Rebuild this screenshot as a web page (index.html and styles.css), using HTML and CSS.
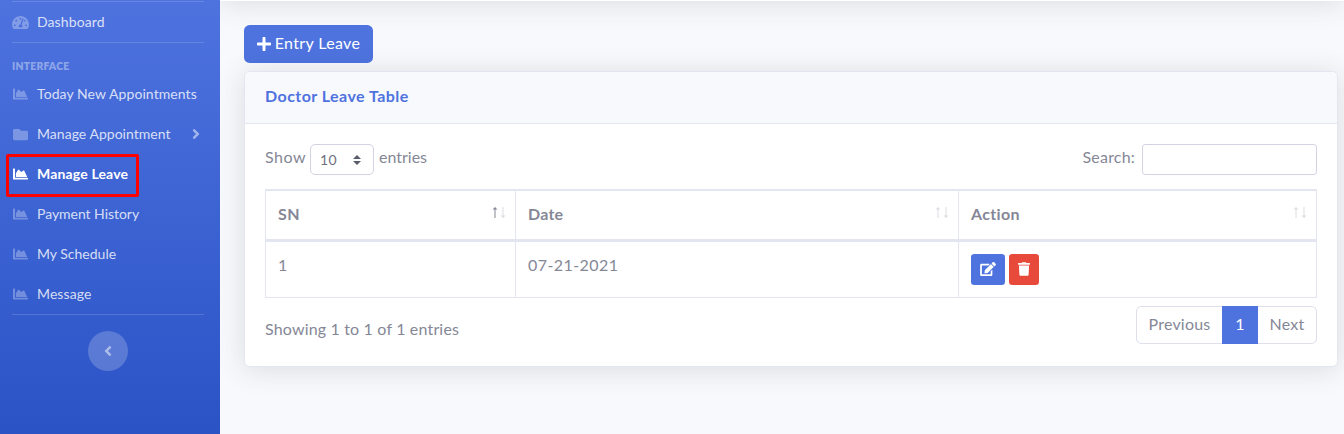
FILE: index.html
```
<!DOCTYPE html>
<html lang="en">
<head>
<meta charset="utf-8">
<title>Doctor Leave</title>
<link rel="stylesheet" href="styles.css">
</head>
<body>
<svg class="sprite" aria-hidden="true">
  <symbol id="chart" viewBox="0 0 17 15"><path d="M1.400 1.500h1.100q.5 0 .5.5v8.700h12.500q.5 0 .5.5v.8q0 .5-.5.5H1.400q-.4 0-.4-.4V1.900q0-.4.4-.4zM3.900 10V6.200L6.200 2.800q.4-.5.8 0L9.200 5l2.300-1.500q.5-.3.8.2L15.200 10z"/></symbol>
  <symbol id="folder" viewBox="0 0 512 512"><path d="M464 128H272l-64-64H48C21.490 64 0 85.490 0 112v288c0 26.510 21.490 48 48 48h416c26.510 0 48-21.490 48-48V176c0-26.510-21.490-48-48-48z"/></symbol>
  <symbol id="gauge" viewBox="0 0 576 512"><path d="M288 32C128.940 32 0 160.940 0 320c0 52.800 14.250 102.260 39.060 144.800 5.610 9.620 16.300 15.200 27.440 15.200h443c11.140 0 21.830-5.580 27.440-15.200C561.750 422.260 576 372.800 576 320c0-159.060-128.940-288-288-288zm0 64c14.710 0 26.580 10.130 30.320 23.650-1.110 2.260-2.640 4.230-3.450 6.670l-9.220 27.670c-5.130 3.490-10.970 6.010-17.640 6.010-17.670 0-32-14.330-32-32S270.330 96 288 96zM96 384c-17.670 0-32-14.330-32-32s14.330-32 32-32 32 14.330 32 32-14.330 32-32 32zm48-160c-17.670 0-32-14.330-32-32s14.330-32 32-32 32 14.330 32 32-14.330 32-32 32zm246.770-72.410l-61.330 184C343.130 347.330 352 364.540 352 384c0 11.720-3.380 22.550-8.880 32H232.880c-5.500-9.450-8.880-20.280-8.880-32 0-33.940 26.500-61.430 59.900-63.590l61.340-184.010c4.170-12.560 17.730-19.450 30.360-15.170 12.570 4.190 19.350 17.790 15.170 30.360zm14.660 57.200l15.520-46.550c3.470-1.290 7.130-2.230 11.050-2.230 17.670 0 32 14.330 32 32s-14.330 32-32 32c-11.380-.010-20.890-6.280-26.570-15.220zM480 384c-17.670 0-32-14.330-32-32s14.330-32 32-32 32 14.330 32 32-14.330 32-32 32z"/></symbol>
  <symbol id="right" viewBox="0 0 256 512"><path d="M224.300 273l-136 136c-9.400 9.400-24.600 9.400-33.900 0l-22.600-22.600c-9.400-9.400-9.400-24.600 0-33.900l96.400-96.400-96.400-96.400c-9.400-9.400-9.400-24.600 0-33.900L54.300 103c9.400-9.400 24.600-9.400 33.900 0l136 136c9.500 9.400 9.500 24.600.1 34z"/></symbol>
  <symbol id="left" viewBox="0 0 256 512"><path d="M31.700 239l136-136c9.400-9.400 24.600-9.400 33.900 0l22.600 22.600c9.400 9.400 9.400 24.600 0 33.900L127.900 256l96.400 96.400c9.400 9.400 9.400 24.600 0 33.900L201.700 409c-9.400 9.400-24.600 9.400-33.900 0l-136-136c-9.500-9.400-9.500-24.600-.1-34z"/></symbol>
  <symbol id="plus" viewBox="0 0 448 512"><path d="M416 208H272V64c0-17.670-14.330-32-32-32h-32c-17.670 0-32 14.330-32 32v144H32c-17.670 0-32 14.330-32 32v32c0 17.670 14.330 32 32 32h144v144c0 17.670 14.330 32 32 32h32c17.670 0 32-14.330 32-32V304h144c17.670 0 32-14.330 32-32v-32c0-17.670-14.330-32-32-32z"/></symbol>
  <symbol id="edit" viewBox="0 0 576 512"><path d="M402.600 83.200l90.200 90.200c3.800 3.800 3.800 10 0 13.800L274.400 405.600l-92.800 10.300c-12.400 1.400-22.900-9.100-21.500-21.500l10.300-92.800L388.800 83.200c3.800-3.800 10-3.800 13.800 0zm162-22.900l-48.800-48.800c-15.200-15.200-39.900-15.200-55.200 0l-35.400 35.400c-3.800 3.800-3.800 10 0 13.800l90.200 90.200c3.800 3.800 10 3.800 13.800 0l35.400-35.400c15.200-15.300 15.200-40 0-55.200zM384 346.200V448H64V128h229.800c3.200 0 6.200-1.300 8.500-3.500l40-40c7.600-7.600 2.200-20.500-8.500-20.500H48C21.500 64 0 85.500 0 112v352c0 26.500 21.500 48 48 48h352c26.500 0 48-21.500 48-48V306.200c0-10.700-12.900-16-20.500-8.500l-40 40c-2.200 2.300-3.500 5.300-3.500 8.500z"/></symbol>
  <symbol id="trash" viewBox="0 0 448 512"><path d="M432 32H312l-9.400-18.700A24 24 0 0 0 281.100 0H166.800a23.720 23.720 0 0 0-21.400 13.300L136 32H16A16 16 0 0 0 0 48v32a16 16 0 0 0 16 16h416a16 16 0 0 0 16-16V48a16 16 0 0 0-16-16zM53.200 467a48 48 0 0 0 47.900 45h245.800a48 48 0 0 0 47.900-45L416 128H32z"/></symbol>
  <symbol id="sort-up" viewBox="0 0 6 11"><path d="M2.500 11V2.500H.5L3 0l2.500 2.500h-2V11z"/></symbol>
  <symbol id="sort-down" viewBox="0 0 6 11"><path d="M2.500 0v8.500h-2L3 11l2.500-2.500h-2V0z"/></symbol>
</svg>

<div class="layout">
  <nav class="sidebar">
    <hr class="divider">
    <a class="nav-item"><svg class="nav-icon gauge"><use href="#gauge"/></svg><span class="t-dashboard">Dashboard</span></a>
    <hr class="divider">
    <div class="heading">INTERFACE</div>
    <a class="nav-item"><svg class="nav-icon"><use href="#chart"/></svg><span class="t-today">Today New Appointments</span></a>
    <a class="nav-item"><svg class="nav-icon"><use href="#folder"/></svg><span class="t-appt">Manage Appointment</span><svg class="caret"><use href="#right"/></svg></a>
    <a class="nav-item active"><svg class="nav-icon"><use href="#chart"/></svg><span class="t-leave">Manage Leave</span></a>
    <a class="nav-item"><svg class="nav-icon"><use href="#chart"/></svg><span class="t-payment">Payment History</span></a>
    <a class="nav-item"><svg class="nav-icon"><use href="#chart"/></svg><span class="t-schedule">My Schedule</span></a>
    <a class="nav-item"><svg class="nav-icon"><use href="#chart"/></svg><span class="t-message">Message</span></a>
    <hr class="divider">
    <button class="collapse" aria-label="Collapse"><svg><use href="#left"/></svg></button>
  </nav>

  <main class="content">
    <header class="topbar"></header>
    <div class="page">
      <button class="btn-entry"><svg><use href="#plus"/></svg><span class="t-entry">Entry Leave</span></button>
      <section class="card">
        <h6 class="card-header"><span class="t-title">Doctor Leave Table</span></h6>
        <div class="card-body">
          <div class="controls">
            <label class="length"><span class="t-show">Show</span>
              <span class="select"><span>10</span><svg viewBox="0 0 8 10"><path d="M4 0L0 4h8zM4 10L0 6h8z"/></svg></span>
              <span class="t-entries">entries</span></label>
            <label class="search"><span class="t-search">Search:</span><input type="text"></label>
          </div>
          <table class="table">
            <colgroup><col class="c1"><col class="c2"><col class="c3"></colgroup>
            <thead>
              <tr>
                <th><div class="th"><span class="t-sn">SN</span><span class="sort asc"><svg><use href="#sort-up"/></svg><svg><use href="#sort-down"/></svg></span></div></th>
                <th><div class="th"><span class="t-date">Date</span><span class="sort"><svg><use href="#sort-up"/></svg><svg><use href="#sort-down"/></svg></span></div></th>
                <th><div class="th"><span class="t-action">Action</span><span class="sort"><svg><use href="#sort-up"/></svg><svg><use href="#sort-down"/></svg></span></div></th>
              </tr>
            </thead>
            <tbody>
              <tr>
                <td>1</td>
                <td><span class="t-day">07-21-2021</span></td>
                <td><div class="actions"><button class="btn-edit" aria-label="Edit"><svg><use href="#edit"/></svg></button><button class="btn-delete" aria-label="Delete"><svg><use href="#trash"/></svg></button></div></td>
              </tr>
            </tbody>
          </table>
          <div class="footer">
            <span class="t-info">Showing 1 to 1 of 1 entries</span>
            <div class="pagination">
              <a class="prev"><span class="t-prev">Previous</span></a><a class="current">1</a><a class="next"><span class="t-next">Next</span></a>
            </div>
          </div>
        </div>
      </section>
    </div>
  </main>
</div>
</body>
</html>
```

FILE: styles.css
```
*, *::after { box-sizing: border-box; }
body {
  margin: 0;
  height: 434px;
  overflow: hidden;
  background: #f8f9fc;
  color: #858796;
  font: 16px/24px Lato, "Open Sans", sans-serif;
}
svg { fill: currentColor; display: block; flex: none; }
.sprite { display: none; }
button { border: 0; padding: 0; font: inherit; color: #fff; display: flex; align-items: center; justify-content: center; }
.layout { display: flex; height: 434px; }

/* Sidebar */
.sidebar {
  width: 220px;
  flex: none;
  padding-top: 1px;
  background: linear-gradient(180deg, #4e73df 0%, #2b53c6 100%);
}
.divider { border: 0; height: 1px; margin: 0 16px 0 12px; background: rgba(255,255,255,.15); }
.nav-item {
  height: 40px;
  padding: 0 20px 0 12px;
  display: flex;
  align-items: center;
  color: rgba(255,255,255,.8);
  font-size: 14px;
  white-space: nowrap;
}
.nav-icon { width: 17px; height: 15px; margin-right: 8px; color: rgba(255,255,255,.3); }
.caret { width: 8px; height: 16px; margin-left: auto; color: rgba(255,255,255,.5); }
.heading {
  height: 31px;
  padding: 15px 12px 0;
  font-size: 10.4px;
  line-height: 16px;
  font-weight: 800;
  letter-spacing: .2px;
  color: rgba(255,255,255,.4);
}
.active { position: relative; color: #fff; font-weight: 700; }
.active .nav-icon { color: #fff; }
.active::after {
  content: "";
  position: absolute;
  left: 6px;
  top: 0;
  width: 133px;
  height: 43px;
  border: 3px solid #f00;
  border-radius: 2px;
}
.collapse {
  width: 40px;
  height: 40px;
  margin: 16px 0 0 88px;
  border-radius: 50%;
  background: rgba(255,255,255,.2);
  color: rgba(255,255,255,.5);
}
.collapse svg { width: 8px; height: 16px; margin-right: 1px; }

/* Tracking */
.t-dashboard, .t-message { letter-spacing: .1px; }
.t-today { letter-spacing: .08px; }
.t-appt { letter-spacing: .03px; }
.t-leave { letter-spacing: .16px; }
.t-payment { letter-spacing: -.04px; }
.t-entry { letter-spacing: .36px; }
.t-title { letter-spacing: .45px; }
.t-show, .t-sn { letter-spacing: .5px; }
.t-search, .t-date, .t-prev { letter-spacing: .2px; }
.t-info { letter-spacing: .17px; }
.t-action { letter-spacing: .35px; }
.t-day { letter-spacing: .42px; }
.t-next { letter-spacing: .3px; }

/* Content */
.content { flex: 1; min-width: 0; overflow: hidden; }
.topbar { height: 70px; margin-top: -69px; background: #fff; box-shadow: 0 2.4px 28px rgba(58,59,69,.15); }
.page { padding: 24px 6px 0 24px; }
.btn-entry { width: 129px; height: 38px; gap: 4px; border-radius: 5.6px; background: #4e73df; }
.btn-entry svg { width: 14px; height: 16px; margin-bottom: 1px; }
.btn-entry span { padding-bottom: 2px; }
.card {
  margin-top: 8px;
  height: 296px;
  background: #fff;
  border: 1px solid #e3e6f0;
  border-radius: 5.6px;
  box-shadow: 0 2.4px 28px rgba(58,59,69,.15);
}
.card-header {
  margin: 0;
  height: 52px;
  padding: 12px 20px;
  border-bottom: 1px solid #e3e6f0;
  border-radius: 5px 5px 0 0;
  background: #f8f9fc;
  color: #4e73df;
  font-size: 16px;
  font-weight: 700;
}
.card-body { padding: 20px; }
.controls { display: flex; justify-content: space-between; height: 31px; }
.length, .search { display: flex; align-items: center; }
.t-show, .t-entries, .t-search { padding-bottom: 5px; }
.select {
  width: 64px;
  height: 31px;
  margin: 0 5px 0 4px;
  padding: 0 12px 0 9px;
  display: flex;
  align-items: center;
  justify-content: space-between;
  border: 1px solid #d1d3e2;
  border-radius: 5px;
  color: #6e707e;
  font-size: 14px;
  letter-spacing: .5px;
}
.select svg { width: 8px; height: 10px; color: #5a5c69; }
.search input { width: 175px; height: 31px; margin-left: 7px; border: 1px solid #d1d3e2; border-radius: 3.2px; background: #fff; }

.table {
  width: 1052px;
  margin-top: 14px;
  table-layout: fixed;
  border-spacing: 0;
  border-left: 1px solid #e3e6f0;
}
.c1 { width: 250px; }
.c2 { width: 443px; }
th, td { padding: 0 12px; border-right: 1px solid #e3e6f0; text-align: left; }
th { height: 53px; border-top: 2px solid #e3e6f0; border-bottom: 3px solid #e3e6f0; font-weight: 700; }
td { height: 56px; padding-top: 11px; vertical-align: top; border-bottom: 1px solid #e3e6f0; }
.th { display: flex; justify-content: space-between; align-items: center; height: 24px; margin: -1px -3px 1px 0; }
.sort { display: flex; gap: 2px; padding-bottom: 3px; color: #dddee3; }
.sort svg { width: 6px; height: 11px; }
.asc svg:first-child { color: #858796; }
.actions { display: flex; gap: 4px; padding-top: 1px; }
.actions button { height: 31px; border-radius: 3.2px; }
.btn-edit { width: 34px; background: #4e73df; }
.btn-delete { width: 30px; background: #e74a3b; }
.btn-edit svg { width: 16px; height: 14px; margin-bottom: 1px; }
.btn-delete svg { width: 12px; height: 14px; margin-bottom: 1px; }

.footer { margin-top: 8px; display: flex; justify-content: space-between; }
.t-info { padding-top: 11px; }
.pagination { display: flex; height: 38px; }
.pagination a { display: flex; align-items: center; justify-content: center; padding-bottom: 2px; border: 1px solid #dddfeb; background: #fff; }
.prev { width: 86px; border-radius: 5.6px 0 0 5.6px; }
.next { width: 59px; border-radius: 0 5.6px 5.6px 0; }
.pagination .prev { border-right: 0; }
.pagination .next { border-left: 0; }
.pagination .current { width: 36px; background: #4e73df; border-color: #4e73df; color: #fff; }
```
